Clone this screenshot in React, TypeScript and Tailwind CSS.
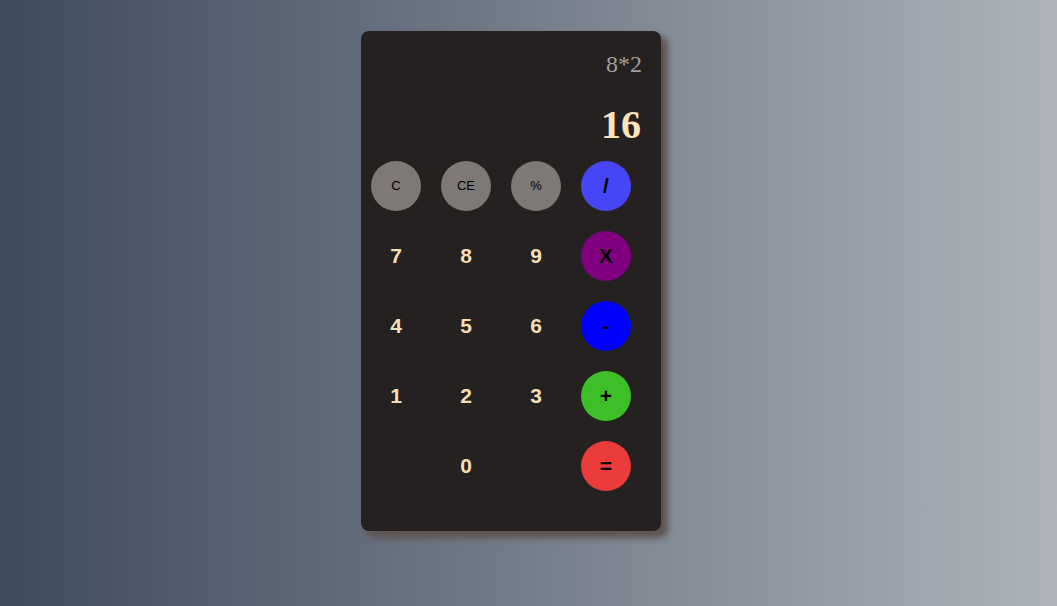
const keys = [
  { label: "C", kind: "fn" },
  { label: "CE", kind: "fn" },
  { label: "%", kind: "fn" },
  { label: "/", kind: "op", bg: "bg-[#4646f8]" },
  { label: "7", kind: "num" },
  { label: "8", kind: "num" },
  { label: "9", kind: "num" },
  { label: "X", kind: "op", bg: "bg-[#800080]" },
  { label: "4", kind: "num" },
  { label: "5", kind: "num" },
  { label: "6", kind: "num" },
  { label: "-", kind: "op", bg: "bg-[#0000ff]" },
  { label: "1", kind: "num" },
  { label: "2", kind: "num" },
  { label: "3", kind: "num" },
  { label: "+", kind: "op", bg: "bg-[#3dbf28]" },
  { label: "", kind: "num" },
  { label: "0", kind: "num" },
  { label: "", kind: "num" },
  { label: "=", kind: "op", bg: "bg-[#ec3b3b]" },
];

const App = () => {
  return (
    <div className="w-full h-screen bg-gradient-to-r from-[#3e4b5c] to-[#afb4bb] pl-[361px] pt-[31px] font-['Liberation_Sans',Arial,sans-serif]">
      <div className="w-[300px] h-[500px] rounded-lg bg-[#252121] shadow-[6px_6px_6px_1px_#5f5351]">
        <div className="h-[130px] flex flex-col items-end pr-[19px] pt-[21px] font-['Liberation_Serif','Times_New_Roman',serif]">
          <div className="text-[24px] leading-[24px] text-[#a19e9d]">8*2</div>
          <div className="text-[40px] leading-[40px] font-bold text-[#fbe3bd] mt-[29px] pr-[1px]">16</div>
        </div>

        <div className="grid grid-cols-[repeat(4,50px)] gap-[20px] px-[10px]">
          {keys.map((k, i) => (
            <button
              key={i}
              className={
                k.kind === "fn"
                  ? "w-[50px] h-[50px] rounded-full bg-[#7e7976] text-black text-[13px] flex items-center justify-center"
                  : k.kind === "op"
                  ? `w-[50px] h-[50px] rounded-full ${k.bg} text-black text-[21px] font-bold flex items-center justify-center`
                  : "w-[50px] h-[50px] rounded-full text-[#f5deb3] text-[21px] font-bold flex items-center justify-center"
              }
            >
              {k.label}
            </button>
          ))}
        </div>
      </div>
    </div>
  );
};

export default App;
